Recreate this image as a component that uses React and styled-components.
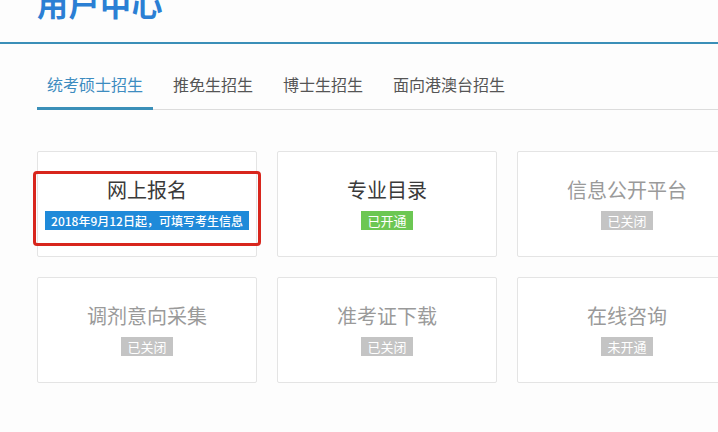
import React, { useState } from "react";
import styled, { createGlobalStyle } from "styled-components";

const GlobalStyle = createGlobalStyle`
  html, body {
    margin: 0;
    padding: 0;
    background: #fdfdfd;
    overflow: hidden;
  }
  body {
    font-family: "Noto Sans CJK SC", "Noto Sans", "Liberation Sans", sans-serif;
  }
`;

const tabs = ["统考硕士招生", "推免生招生", "博士生招生", "面向港澳台招生"];

const services = [
  { title: "网上报名", badge: "2018年9月12日起，可填写考生信息", status: "info", marked: true },
  { title: "专业目录", badge: "已开通", status: "open" },
  { title: "信息公开平台", badge: "已关闭", status: "off" },
  { title: "调剂意向采集", badge: "已关闭", status: "off" },
  { title: "准考证下载", badge: "已关闭", status: "off" },
  { title: "在线咨询", badge: "未开通", status: "off" },
];

const badgeColors = {
  info: "#1f8ad9",
  open: "#6cc753",
  off: "#c4c4c4",
};

const App = () => {
  const [active, setActive] = useState(0);

  return (
    <Page>
      <GlobalStyle />
      <Header>
        <Title>用户中心</Title>
      </Header>
      <TabBar>
        {tabs.map((t, i) => (
          <Tab key={t} $active={i === active} onClick={() => setActive(i)}>
            {t}
          </Tab>
        ))}
      </TabBar>
      <Grid>
        {services.map((s) => (
          <Card key={s.title}>
            <CardTitle $disabled={s.status === "off"}>{s.title}</CardTitle>
            <Badge $status={s.status}>{s.badge}</Badge>
            {s.marked && <Highlight />}
          </Card>
        ))}
      </Grid>
    </Page>
  );
};

export default App;

const Page = styled.div`
  width: 718px;
  height: 432px;
  overflow: hidden;
`;

const Header = styled.div`
  height: 42px;
  border-bottom: 2px solid #3a8fb8;
  overflow: hidden;
  padding-left: 37px;
`;

const Title = styled.h1`
  margin: -13px 0 0;
  font-size: 31px;
  line-height: 31px;
  font-weight: 700;
  color: #2b7fd4;
  letter-spacing: 0.5px;
`;

const TabBar = styled.div`
  display: flex;
  gap: 10px;
  margin: 18px 0 0 37px;
  border-bottom: 1px solid #dcdcdc;
`;

const Tab = styled.div`
  padding: 0 10px;
  height: 45px;
  line-height: 45px;
  font-size: 16px;
  color: ${(p) => (p.$active ? "#3d8cc0" : "#555")};
  border-bottom: 3px solid ${(p) => (p.$active ? "#3a8fb8" : "transparent")};
  margin-bottom: -1px;
  cursor: pointer;
  white-space: nowrap;
`;

const Grid = styled.div`
  display: grid;
  grid-template-columns: repeat(3, 220px);
  gap: 20px;
  margin: 41px 0 0 37px;
`;

const Card = styled.div`
  position: relative;
  box-sizing: border-box;
  height: 106px;
  background: #fff;
  border: 1px solid #e4e4e4;
  border-radius: 2px;
  display: flex;
  flex-direction: column;
  align-items: center;
  justify-content: center;
  gap: 10px;
`;

const CardTitle = styled.div`
  font-size: 20px;
  line-height: 22px;
  color: ${(p) => (p.$disabled ? "#9a9a9a" : "#3a3a3a")};
`;

const Badge = styled.span`
  display: inline-block;
  height: 19px;
  line-height: 19px;
  padding: 0 6px;
  font-size: ${(p) => (p.$status === "info" ? "12px" : "13px")};
  color: #fff;
  font-weight: ${(p) => (p.$status === "info" ? 500 : 400)};
  background: ${(p) => badgeColors[p.$status]};
  white-space: nowrap;
`;

const Highlight = styled.div`
  position: absolute;
  top: 19px;
  left: -5px;
  width: 228px;
  height: 75px;
  box-sizing: border-box;
  border: 3px solid #d8261d;
  border-radius: 4px;
  pointer-events: none;
`;
